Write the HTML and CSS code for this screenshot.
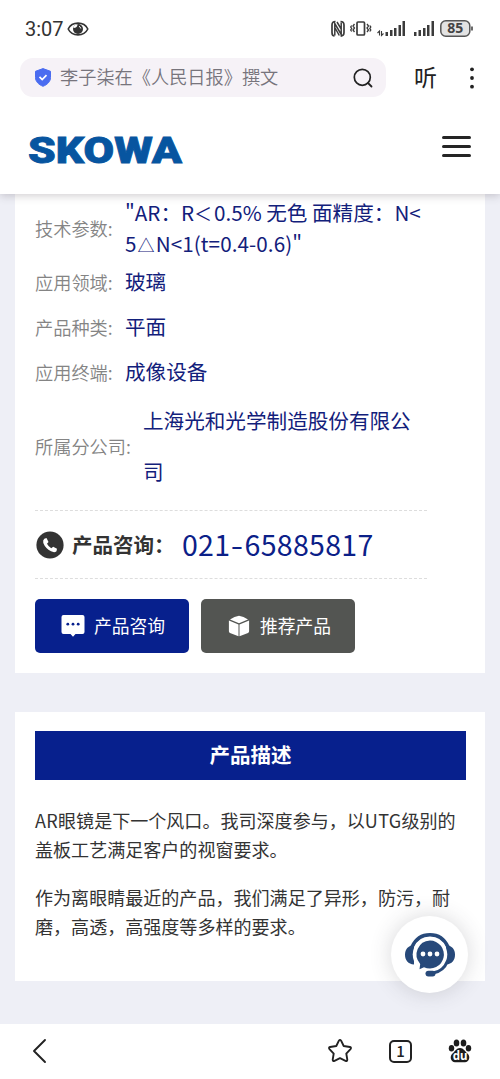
FILE: index.html
```html
<!DOCTYPE html>
<html lang="zh-CN">
<head>
<meta charset="utf-8">
<title>SKOWA</title>
<link rel="stylesheet" href="styles.css">
</head>
<body>
<div class="screen">
  <header class="top">
    <div class="status">
      <span class="clock">3:07</span>
      <svg class="eye" width="22" height="16" viewBox="0 0 22 16"><path d="M1.200 8C5 .2 17 .2 20.800 8C17 15.800 5 15.800 1.200 8Z" fill="none" stroke="#333" stroke-width="1.600"/><circle cx="11" cy="8" r="5" fill="#333"/><path d="M6.500 5.500Q8 3.200 10.500 3.300 10.500 7 6.500 7Z" fill="#fff"/><path d="M12 5.300a3 3 0 0 1 1.800 2.200" fill="none" stroke="#fff" stroke-width="1"/></svg>
      <svg class="signals" width="144" height="20" viewBox="0 0 144 20">
        <g fill="none" stroke="#3b3b3b">
          <path d="M5.500 2.500Q2 2.500 2 6v7.500q0 3.500 2.500 3.500M10.500 2.500Q14 2.500 14 6v7.500q0 3.500-3.500 3.500" stroke-width="1.700"/>
          <path d="M4.800 16.500V4.500l6.400 11V3.500M7 3l4.500 7.500M4.800 8.500l4.500 8" stroke-width="1.500"/>
          <rect x="27" y="3" width="7.500" height="13" rx="1" stroke-width="1.700"/>
          <path d="M24.500 5l-1.500 2 1.500 2-1.500 2 1.500 2M21.700 6.500l-1 1.500 1 1.500-1 1.500 1 1.500M37 5l1.500 2-1.500 2 1.500 2-1.500 2M39.800 6.500l1 1.500-1 1.500 1 1.500-1 1.500" stroke-width="1.300"/>
          <path d="M49.500 16.500v-4.500l-2 2M51.500 12v4.500l2-2" stroke-width="1.100"/>
        </g>
        <g fill="#3b3b3b">
          <rect x="55.500" y="13" width="2.500" height="4"/><rect x="60" y="11" width="2.500" height="6"/><rect x="64" y="9" width="2.500" height="8"/><rect x="68.500" y="6" width="2.500" height="11"/><rect x="72.500" y="2" width="2.500" height="15"/>
          <rect x="84" y="13" width="2.500" height="4"/><rect x="88.500" y="11" width="2.500" height="6"/><rect x="93" y="9" width="2.500" height="8"/><rect x="97" y="6" width="2.500" height="11"/><rect x="101.500" y="2" width="2.500" height="15"/>
        </g>
        <rect x="110.800" y="1.800" width="29" height="15.400" rx="5" fill="#e3e3e3" stroke="#555" stroke-width="1.500"/>
        <path d="M142 7.500v4" stroke="#444" stroke-width="1.600"/>
        <text class="battery-level" x="125.300" y="14.400" text-anchor="middle">85</text>
      </svg>
    </div>
    <div class="browser-bar">
      <div class="search">
        <svg class="shield" width="18" height="19" viewBox="0 0 18 19"><path d="M9 .6 16.500 3.300v6.200c0 4-3 7-7.500 8.800C4.500 16.500 1.500 13.500 1.500 9.500V3.300Z" fill="#4a6cf0" stroke="#4a6cf0" stroke-linejoin="round"/><path d="m5.500 8.800 2.700 2.700 4.300-4.300" fill="none" stroke="#fff" stroke-width="1.700"/></svg>
        <span class="query">李子柒在《人民日报》撰文</span>
        <svg class="magnifier" width="20" height="20" viewBox="0 0 20 20"><circle cx="9.300" cy="9.300" r="8" fill="none" stroke="#222" stroke-width="1.700"/><path d="m15 15 3.500 3.500" stroke="#222" stroke-width="1.800" stroke-linecap="round"/></svg>
      </div>
      <span class="listen">听</span>
      <svg class="more" width="6" height="22" viewBox="0 0 6 22" fill="#222"><circle cx="3" cy="2.300" r="1.900"/><circle cx="3" cy="11" r="1.900"/><circle cx="3" cy="19.700" r="1.900"/></svg>
    </div>
    <div class="site-bar">
      <svg class="logo" width="164" height="50" viewBox="0 0 164 50"><text class="logo-text" x="1" y="30.500" textLength="154" lengthAdjust="spacingAndGlyphs">SKOWA</text></svg>
      <div class="burger"><i></i><i></i><i></i></div>
    </div>
  </header>

  <main class="page">
    <section class="card specs">
      <div class="row"><span class="label">技术参数:</span><span class="value first"><span class="l1">"AR：R<span class="lt">＜</span>0.5% 无色 面精度：N&lt;</span><br><span class="l2">5<span class="tri">△</span>N&lt;1(t=0.4-0.6)"</span></span></div>
      <div class="row"><span class="label">应用领域:</span><span class="value">玻璃</span></div>
      <div class="row"><span class="label">产品种类:</span><span class="value">平面</span></div>
      <div class="row"><span class="label">应用终端:</span><span class="value">成像设备</span></div>
      <div class="row company"><span class="label">所属分公司:</span><span class="value">上海光和光学制造股份有限公<br>司</span></div>
      <div class="hotline">
        <svg class="phone-icon" width="28" height="28" viewBox="0 0 28 28"><circle cx="14" cy="14" r="13.600" fill="#333"/><path d="M8.300 7.800 10.500 7 12.500 11 11 12.800Q12.500 15.800 15.300 17.200L17.200 15.800 21 17.800 20.500 20.200Q18.500 22 15 20.300 9.500 17.500 7.300 12 6.600 9.300 8.300 7.800Z" fill="#fff"/></svg>
        <b class="hotline-label">产品咨询：</b>
        <span class="number">021<span class="dash">-</span>65885817</span>
      </div>
      <div class="buttons">
        <div class="btn blue">
          <svg class="chat" width="24" height="24" viewBox="0 0 24 24"><path d="M2.500 1h19a2 2 0 0 1 2 2v15a2 2 0 0 1-2 2h-7L12 22.800 9.500 20h-7a2 2 0 0 1-2-2V3a2 2 0 0 1 2-2Z" fill="#fff"/><g fill="#07208d"><circle cx="6.800" cy="10.200" r="1.400"/><circle cx="12" cy="10.200" r="1.400"/><circle cx="17.200" cy="10.200" r="1.400"/></g></svg>
          <span>产品咨询</span>
        </div>
        <div class="btn gray">
          <svg class="box" width="22" height="22" viewBox="0 0 22 22" fill="#fff"><path d="M11 .8Q15.500 1.200 20 4.500L11 8.300 2 4.500Q6.500 1.200 11 .8Z"/><path d="M.9 5.600 10.500 9.500V21.200L2 18Q.9 17.400.9 16.200ZM21.100 5.600 11.500 9.500V21.200L20 18Q21.100 17.400 21.100 16.200Z"/></svg>
          <span>推荐产品</span>
        </div>
      </div>
    </section>

    <section class="card description">
      <h2 class="title">产品描述</h2>
      <p class="para"><span class="wide">AR</span>眼镜是下一个风口。我司深度参与，以<span class="wide">UTG</span>级别的<br>盖板工艺满足客户的视窗要求。</p>
      <p class="para">作为离眼睛最近的产品，我们满足了异形，防污，耐<br>磨，高透，高强度等多样的要求。</p>
    </section>
  </main>

  <div class="service">
    <svg width="52" height="44" viewBox="0 0 52 44">
      <path d="M8 14C12 5 18 1.800 26 1.800S40 5 44 14" fill="none" stroke="#27497a" stroke-width="3.500"/>
      <path d="M10 12v19.500C4 31 1 27 1 21.700S4 12.500 10 12ZM42 12v19.500c6-.5 9-4.500 9-9.800S48 12.500 42 12Z" fill="#27497a"/>
      <circle cx="26" cy="21.500" r="17.300" fill="#fff"/>
      <path d="M26 7.500a14 14 0 1 1-6 26.700l-4.500 2 .7-5.300A14 14 0 0 1 26 7.500Z" fill="#27497a"/>
      <path d="M43.500 28C41 34.500 37 38.800 29 40" fill="none" stroke="#27497a" stroke-width="3"/>
      <rect x="21.500" y="37.700" width="10" height="5.800" rx="2.900" fill="#27497a"/>
      <g fill="#fff"><circle cx="19" cy="21" r="2.400"/><circle cx="26" cy="21" r="2.400"/><circle cx="33" cy="21" r="2.400"/></g>
    </svg>
  </div>

  <nav class="bottom">
    <svg class="back" width="16" height="26" viewBox="0 0 16 26"><path d="M14 2 3 13 14 24" fill="none" stroke="#222" stroke-width="1.900" stroke-linecap="round" stroke-linejoin="round"/></svg>
    <svg class="star" width="26" height="26" viewBox="0 0 26 26"><path d="M11.900 2.700Q13 1.100 14.100 2.700L16.700 8 22.900 9Q24.700 9.600 23.500 11.100L19.300 15.600 20.300 21.600Q20.300 23.500 18.500 22.900L13 20.200 7.500 22.900Q5.700 23.500 5.700 21.600L6.700 15.600 2.500 11.100Q1.300 9.600 3.100 9L9.300 8Z" fill="none" stroke="#222" stroke-width="1.900" stroke-linejoin="round"/></svg>
    <div class="tabs">1</div>
    <svg class="paw" width="24" height="24" viewBox="0 0 24 24"><g fill="#1c1c1c"><ellipse cx="8.500" cy="4" rx="2.800" ry="3.600"/><ellipse cx="15.500" cy="4" rx="2.800" ry="3.600"/><ellipse cx="3.500" cy="9.300" rx="2.700" ry="3.200"/><ellipse cx="20.500" cy="9.300" rx="2.700" ry="3.200"/><path d="M12 9c3.500 0 5 3.300 7.500 5.500 3.500 3.200 1.500 8.700-2.500 8.700H7c-4 0-6-5.500-2.500-8.700C7 12.300 8.500 9 12 9Z"/></g><text class="du" x="12" y="21.300" text-anchor="middle">du</text></svg>
  </nav>
</div>
</body>
</html>
```
FILE: styles.css
```css
* { box-sizing: border-box; }
body { margin: 0; font-family: "Noto Sans CJK SC", sans-serif; }
svg { display: block; flex: none; }
.screen { position: relative; width: 500px; height: 1079px; display: flex; flex-direction: column; overflow: hidden; background: #eeeff6; }

.top { position: relative; z-index: 1; height: 194px; flex: none; background: #fff; box-shadow: 0 1px 9px rgba(60, 50, 60, .28); }
.status { height: 58px; display: flex; align-items: center; padding-left: 25px; }
.clock { font: 20px/24px Roboto, sans-serif; color: #333; width: 42px; }
.signals { margin-left: 241px; }
.battery-level { font: bold 14px "Noto Sans", sans-serif; fill: #444; }
.browser-bar { height: 39px; display: flex; align-items: center; }
.search { width: 366px; height: 39px; margin-left: 20px; padding-left: 14px; border-radius: 13px; background: #f6f2f7; display: flex; align-items: center; }
.query { width: 302px; height: 38px; margin-left: 8px; font-size: 18.200px; line-height: 35px; color: #77747c; white-space: nowrap; font-weight: 350; }
.magnifier { margin-left: -9px; }
.listen { height: 38px; margin-left: 28px; width: 24px; font-size: 23px; line-height: 34px; color: #222; }
.more { margin-left: 31px; }
.site-bar { height: 97px; display: flex; align-items: flex-start; justify-content: space-between; padding: 36px 29px 0 27px; }
.logo { margin-top: -1px; }
.logo-text { font: 900 37px Roboto, sans-serif; fill: #0755a0; stroke: #0755a0; stroke-width: .8px; }
.logo { padding-top: 0; }
.burger { width: 29px; padding-top: 3px; display: flex; flex-direction: column; gap: 6px; }
.burger i { height: 3px; border-radius: 2px; background: #252525; }

.page { flex: 1; padding: 0 15px; }
.card { background: #fff; padding: 0 20px; }
.specs { height: 479px; padding-top: 3px; }
.row { height: 45px; display: flex; align-items: center; white-space: nowrap; }
.row:first-child { height: 62px; }
.label { width: 90px; font-size: 18.200px; font-weight: 350; color: #848484; }
.value { font-size: 20.600px; line-height: 31px; color: #12207b; }
.lt { display: inline-block; width: 20px; font-size: 18px; line-height: 20px; }
.tri { font-size: 17px; line-height: 20px; padding: 0 1px; }
.l2 { letter-spacing: .1px; }
.company { height: 103px; }
.company .label { width: 108px; }
.company .value { line-height: 51px; }
.hotline { width: 392px; height: 69px; margin-top: 13px; border: dashed #ddd; border-width: 1px 0; display: flex; align-items: center; padding-left: 1px; }
.hotline-label { width: 110px; height: 32px; margin-left: 8px; font-size: 20.500px; line-height: 30px; color: #333; white-space: nowrap; }
.number { height: 42px; font-size: 28.500px; line-height: 40px; letter-spacing: .3px; color: #0b2088; }
.dash { display: inline-block; transform: scaleX(1.25); margin: 0 2px; }
.buttons { display: flex; gap: 12px; margin-top: 20px; }
.btn { width: 154px; height: 54px; border-radius: 5px; padding-left: 26px; display: flex; align-items: center; gap: 9px; color: #fff; font-size: 17.800px; line-height: 30px; }
.btn span { height: 33px; }
.blue { background: #07208d; }
.gray { background: #535552; padding-left: 27px; gap: 10px; }

.description { height: 269px; margin-top: 39px; padding-top: 19px; }
.title { width: 431px; height: 49px; margin: 0 0 26px; background: #07208d; color: #fff; font-size: 20.500px; line-height: 46px; text-align: center; }
.para { margin: 0 0 19px; font-size: 18.060px; line-height: 29px; color: #333; white-space: nowrap; }
.wide { letter-spacing: .3px; }

.service { position: absolute; left: 391px; top: 916px; width: 77px; height: 77px; border-radius: 50%; background: #fff; box-shadow: 0 0 22px rgba(60, 60, 70, .2); display: flex; align-items: center; justify-content: center; }
.bottom { position: relative; height: 55px; flex: none; background: #fff; display: flex; align-items: center; padding: 0 0 1px 31px; }
.star { margin-left: 280px; }
.tabs { width: 23px; height: 23px; margin-left: 36px; border: 2px solid #222; border-radius: 5px; font: 500 15px/18px "Noto Sans CJK SC", sans-serif; text-align: center; color: #222; }
.paw { margin-left: 36px; }
.du { font: bold 11.500px "Noto Sans", sans-serif; fill: #fff; }
```
